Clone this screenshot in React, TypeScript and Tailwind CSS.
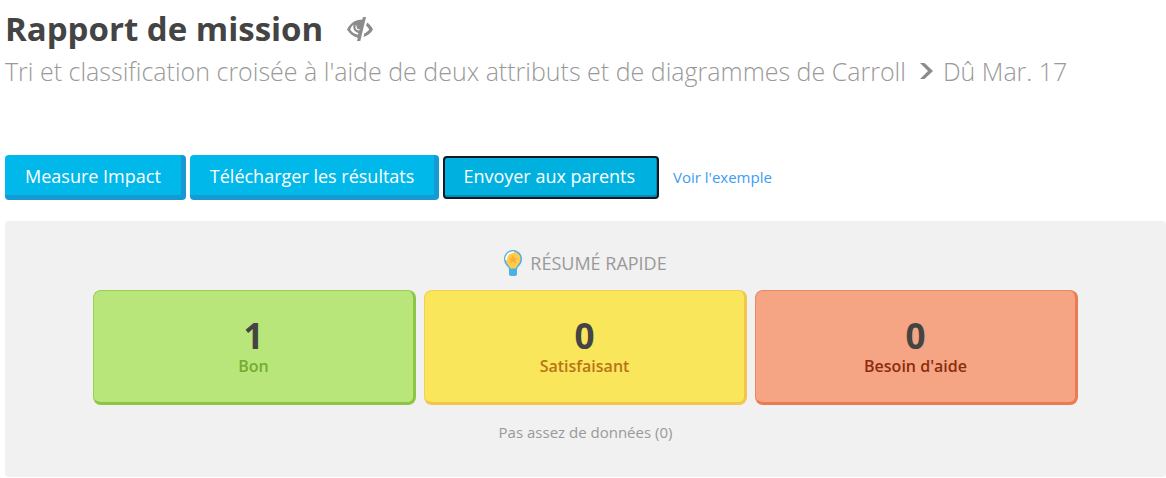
import { ReactNode } from "react";

const cards = [
  {
    label: "Bon",
    count: 1,
    box: "bg-[#b8e67a] border-[#9bd052] border-r-[#8dc644] border-b-[#8dc644]",
    text: "text-[#76ab2f]",
  },
  {
    label: "Satisfaisant",
    count: 0,
    box: "bg-[#f9e65a] border-[#f5cd55] border-r-[#f3c64b] border-b-[#f3c64b]",
    text: "text-[#b97318]",
  },
  {
    label: "Besoin d'aide",
    count: 0,
    box: "bg-[#f5a484] border-[#ec8760] border-r-[#e97c52] border-b-[#e97c52]",
    text: "text-[#8b2c0d]",
  },
];

function HiddenEyeIcon() {
  return (
    <svg viewBox="0 0 26 24" className="h-6 w-[26px]" fill="none" aria-hidden="true">
      <path
        d="M16 0 H19 L13.300 24 H10 L10.800 20.800 C6 19.500 2.500 16.500 0 12.500 C3 6.500 8 2.500 15.400 2.500 Z"
        fill="#8c8c8c"
      />
      <path
        d="M6.500 7.500 C4.800 9 4 10.500 3.200 12.500 C5 15.300 7.500 17 11 17.800 L11.400 16 C7.500 15 5.500 11.500 6.500 7.500 Z"
        fill="#fff"
      />
      <path d="M9.200 8.500 C8.500 11.500 10 13.300 12.500 12.700" stroke="#fff" strokeWidth="1.200" />
      <path
        d="M20 5.500 C22.500 7 24.500 9.500 26 12.500 C24 16 21 18.700 16.500 20 L17.300 16.500 C19.300 15.700 21 14.300 22.200 12.500 C21.400 10.800 20.500 9.700 19 8.700 Z"
        fill="#8c8c8c"
      />
    </svg>
  );
}

function BulbIcon() {
  return (
    <svg viewBox="0 0 18 26" className="h-[26px] w-[18px]" aria-hidden="true">
      <path
        d="M9 0 C4 0 0 4 0 9 C0 12 1.500 14.500 3.500 16.500 C4.500 17.500 5 18.500 5 20 V24 Q5 26 7 26 H11 Q13 26 13 24 V20 C13 18.500 13.500 17.500 14.500 16.500 C16.500 14.500 18 12 18 9 C18 4 14 0 9 0 Z"
        fill="#4bb1e4"
      />
      <path
        d="M9 1.500 C4.800 1.500 1.500 4.800 1.500 9 C1.500 12 3 13.500 4.500 15.500 C5.500 16.800 6 18 6.500 18.500 H11.500 C12 18 12.500 16.800 13.500 15.500 C15 13.500 16.500 12 16.500 9 C16.500 4.800 13.200 1.500 9 1.500 Z"
        fill="#fdcb50"
      />
      <path d="M2.200 10 C2.200 5 5 2.200 10 2.200" fill="none" stroke="#fff" strokeWidth="1.800" />
      <path
        d="M9 5 L10.300 8 L13.500 8.200 L11.200 10.300 L12 13.500 L9 11.800 L6 13.500 L6.800 10.300 L4.500 8.200 L7.700 8 Z"
        fill="#fdb02b"
      />
    </svg>
  );
}

function ActionButton({ children, focused }: { children: ReactNode; focused?: boolean }) {
  return (
    <button
      type="button"
      className={
        focused
          ? "h-[43px] rounded-[4px] border-2 border-[#101820] bg-[#00b1df] pr-[22px] pl-[18px] pb-[2px] text-[18px] text-white shadow-[inset_-1px_-2px_0_#078abb]"
          : "h-[45px] rounded-[4px] border-r-[5px] border-b-[5px] border-[#169ad3] bg-[#00b8e9] px-[20px] pt-[2px] text-[18px] text-white"
      }
    >
      {children}
    </button>
  );
}

export default function App() {
  return (
    <main className="bg-white pl-[5px] font-['Open_Sans',sans-serif]">
      <header className="pt-[5px]">
        <div className="flex items-center gap-[24px]">
          <h1 className="text-[33px] leading-[48px] font-bold text-[#444]">Rapport de mission</h1>
          <HiddenEyeIcon />
        </div>
        <p className="flex items-center text-[25px] leading-[36px] font-light text-[#999]">
          <span>Tri et classification croisée à l'aide de deux attributs et de diagrammes de Carroll</span>
          <svg viewBox="0 0 13 16" className="mr-[10px] ml-[14px] h-4 w-[13px]" fill="none" aria-hidden="true">
            <path d="M0 0 H4.500 L13 8 L4.500 16 H0 L8 8 Z" fill="#8c8c8c" />
          </svg>
          <span>Dû Mar. 17</span>
        </p>
      </header>

      <div className="mt-[66px] flex items-center gap-1">
        <ActionButton>Measure Impact</ActionButton>
        <ActionButton>Télécharger les résultats</ActionButton>
        <ActionButton focused>Envoyer aux parents</ActionButton>
        <a href="#exemple" className="ml-[10px] text-[15px] text-[#3d9cf5]">
          Voir l'exemple
        </a>
      </div>

      <section className="mt-[21px] rounded-[4px] bg-[#f1f1f1] px-[88px] pt-[28px] pb-[33px]">
        <h2 className="flex items-center justify-center gap-2 text-[18px] leading-[28px] text-[#999]">
          <BulbIcon />
          RÉSUMÉ RAPIDE
        </h2>
        <div className="mt-[13px] grid grid-cols-3 gap-2">
          {cards.map((card) => (
            <div
              key={card.label}
              className={`flex h-[115px] flex-col items-center justify-center rounded-[8px] border border-r-[3px] border-b-[3px] ${card.box}`}
            >
              <span className="text-[35px] leading-[38px] font-bold text-[#444]">{card.count}</span>
              <span className={`text-[16px] leading-[22px] font-semibold ${card.text}`}>{card.label}</span>
            </div>
          ))}
        </div>
        <p className="mt-4 mb-px text-center text-[15px] leading-[22px] text-[#999]">Pas assez de données (0)</p>
      </section>
    </main>
  );
}
